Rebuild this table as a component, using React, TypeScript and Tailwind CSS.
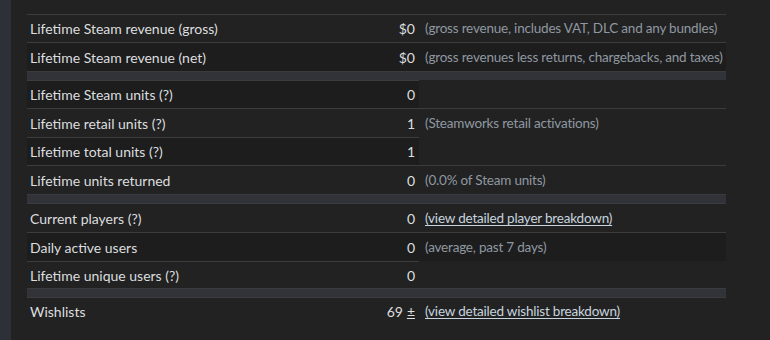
type Row =
  | { kind: "spacer" }
  | {
      kind: "row";
      label: string;
      value: string;
      note?: string;
      link?: boolean;
      plusMinus?: boolean;
      dark?: boolean;
      h: string;
    };

const rows: Row[] = [
  { kind: "row", label: "Lifetime Steam revenue (gross)", value: "$0", note: "(gross revenue, includes VAT, DLC and any bundles)", h: "h-[28px]" },
  { kind: "row", label: "Lifetime Steam revenue (net)", value: "$0", note: "(gross revenues less returns, chargebacks, and taxes)", dark: true, h: "h-[29px]" },
  { kind: "spacer" },
  { kind: "row", label: "Lifetime Steam units (?)", value: "0", dark: true, h: "h-[28px]" },
  { kind: "row", label: "Lifetime retail units (?)", value: "1", note: "(Steamworks retail activations)", h: "h-[29px]" },
  { kind: "row", label: "Lifetime total units (?)", value: "1", dark: true, h: "h-[28px]" },
  { kind: "row", label: "Lifetime units returned", value: "0", note: "(0.0% of Steam units)", h: "h-[29px]" },
  { kind: "spacer" },
  { kind: "row", label: "Current players (?)", value: "0", note: "(view detailed player breakdown)", link: true, h: "h-[29px]" },
  { kind: "row", label: "Daily active users", value: "0", note: "(average, past 7 days)", dark: true, h: "h-[29px]" },
  { kind: "row", label: "Lifetime unique users (?)", value: "0", h: "h-[27px]" },
  { kind: "spacer" },
  { kind: "row", label: "Wishlists", value: "69", note: "(view detailed wishlist breakdown)", link: true, plusMinus: true, h: "h-[28px]" },
];

export default function App() {
  return (
    <div
      className="flex w-[770px] h-[340px] bg-[#222223] text-[14px] text-[#dcdedf]"
      style={{ fontFamily: "Lato, 'Liberation Sans', sans-serif" }}
    >
      <div className="w-[11px] shrink-0 bg-[#2d3037]" />
      <div className="pl-[16px] pt-[14px]">
        <div className="flex flex-col w-[699px]">
          {rows.map((r, i) => {
            if (r.kind === "spacer") {
              return <div key={i} className="h-[9px] w-full bg-[#323338] border-t border-[#3a3b3e]" />;
            }
            return (
              <div
                key={i}
                className={`flex items-center border-t border-[#3b3c3e] ${r.h} ${r.note ? "w-full" : "w-[392px]"} ${r.dark ? "bg-[#1d1d1e]" : "bg-[#222223]"}`}
              >
                <div className="w-[300px] shrink-0 pl-[3px]">{r.label}</div>
                <div className="w-[92px] shrink-0 pr-[4px] text-right whitespace-nowrap">
                  {r.value}
                  {r.plusMinus && <span className="ml-[4px] underline">±</span>}
                </div>
                {r.note && (
                  <div
                    className={`flex-1 pl-[6px] whitespace-nowrap text-[13.5px] tracking-[-0.2px] ${r.link ? "text-[#c6d4df] underline underline-offset-2" : "text-[#8f98a0]"}`}
                  >
                    {r.note}
                  </div>
                )}
              </div>
            );
          })}
        </div>
      </div>
    </div>
  );
}
